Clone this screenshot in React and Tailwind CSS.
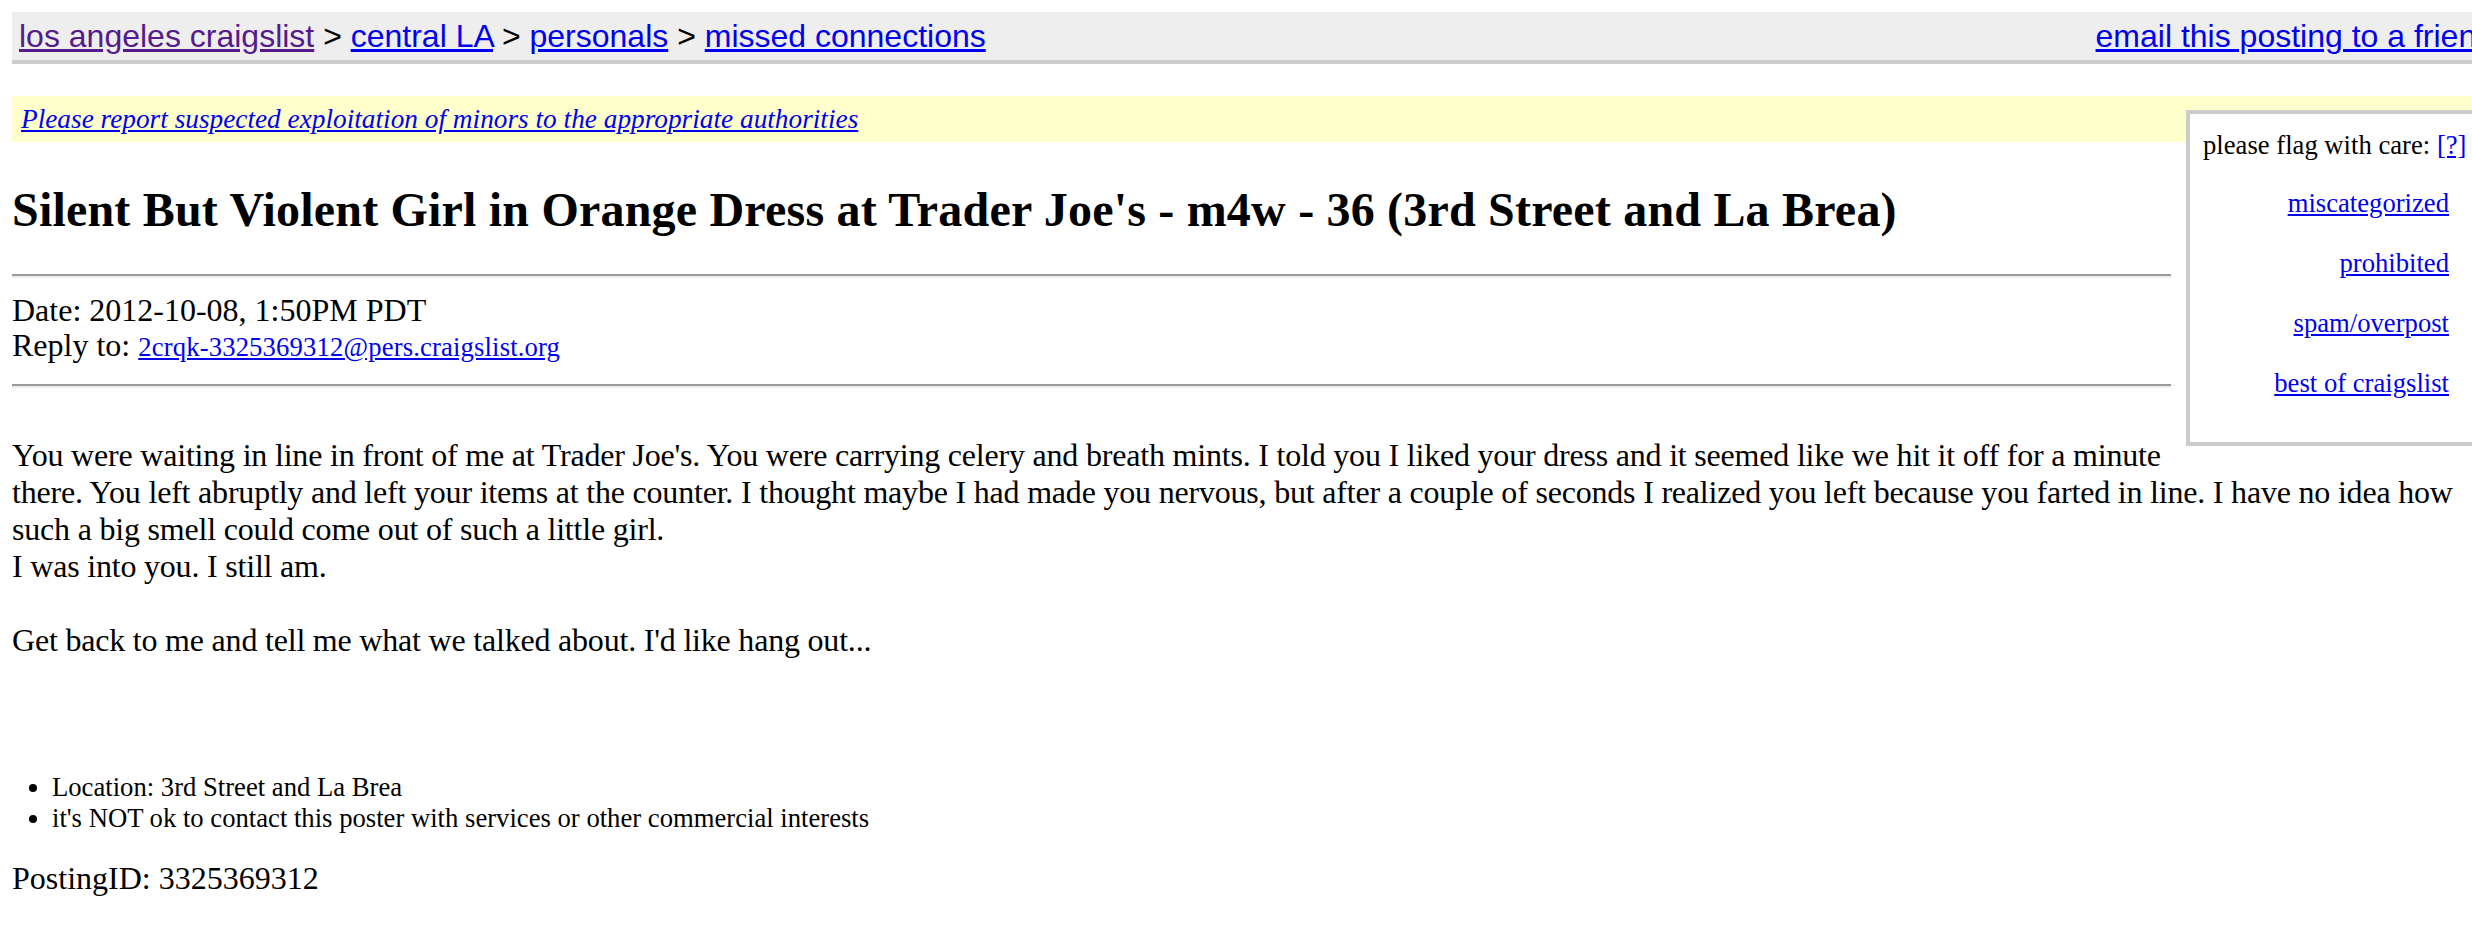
const FLAGS = ["miscategorized", "prohibited", "spam/overpost", "best of craigslist"];

const CRUMBS = [
  { label: "los angeles craigslist", visited: true },
  { label: "central LA" },
  { label: "personals" },
  { label: "missed connections" },
];

function Rule({ className = "" }) {
  return (
    <div className={`overflow-hidden ${className}`}>
      <div className="h-[2px] bg-[#9a9a9a]" />
      <div className="h-[2px] bg-[#ececec]" />
    </div>
  );
}

export default function App() {
  return (
    <div className="w-[2472px] h-[941px] overflow-hidden bg-white text-black font-['Liberation_Serif','Times_New_Roman',serif]">
      <div className="w-[2488px] ml-[12px] pt-[12px]">
        <div className="flex h-[52px] items-center justify-between border-b-4 border-[#cccccc] bg-[#eeeeee] pl-[7px] pr-[6px] font-['Liberation_Sans',Arial,sans-serif] text-[32px]">
          <div className="whitespace-nowrap">
            {CRUMBS.map((c, i) => (
              <span key={c.label}>
                {i > 0 && <span> &gt; </span>}
                <a href="#" className={`underline ${c.visited ? "text-[#551a8b]" : "text-[#0000ee]"}`}>
                  {c.label}
                </a>
              </span>
            ))}
          </div>
          <a href="#" className="whitespace-nowrap text-[#0000ee] underline">
            email this posting to a friend
          </a>
        </div>

        <div className="mt-[32px] flex h-[46px] items-center bg-[#ffffcc] pl-[9px]">
          <a href="#" className="text-[27.3px] italic text-[#0000ee] underline">
            Please report suspected exploitation of minors to the appropriate authorities
          </a>
        </div>

        <div className="float-right -mt-[32px] ml-[15px] h-[336px] w-[314px] border-4 border-[#cccccc] bg-white pl-[13px] pt-[16px] text-[26.67px] leading-[30.67px]">
          <div className="whitespace-nowrap">
            please flag with care:{" "}
            <a href="#" className="text-[#0000ee] underline">[?]</a>
          </div>
          <div className="mt-[27px] flex flex-col items-end gap-[29.5px] pr-[47px]">
            {FLAGS.map((f) => (
              <a key={f} href="#" className="text-[#0000ee] underline whitespace-nowrap">
                {f}
              </a>
            ))}
          </div>
        </div>

        <h2 className="mt-[40px] text-[48px] font-bold leading-[55px] tracking-[0.2px]">
          Silent But Violent Girl in Orange Dress at Trader Joe's - m4w - 36 (3rd Street and La Brea)
        </h2>

        <Rule className="mt-[37px]" />

        <div className="mt-[15px] text-[32px] leading-[35px]">
          <div>Date: 2012-10-08, 1:50PM PDT</div>
          <div>
            Reply to:{" "}
            <a href="#" className="text-[26.67px] tracking-[0.15px] text-[#0000ee] underline">
              2crqk-3325369312@pers.craigslist.org
            </a>
          </div>
        </div>

        <Rule className="mt-[19px]" />

        <div className="mt-[49px] text-[32px] leading-[37px] tracking-[-0.2px]">
          You were waiting in line in front of me at Trader Joe's. You were carrying celery and breath mints. I told you I liked your dress and it seemed like we hit it off for a minute there. You left abruptly and left your items at the counter. I thought maybe I had made you nervous, but after a couple of seconds I realized you left because you farted in line. I have no idea how such a big smell could come out of such a little girl.
          <br />
          I was into you. I still am.
          <br />
          <br />
          Get back to me and tell me what we talked about. I'd like hang out...
        </div>

        <ul className="mt-[113px] list-disc pl-[40px] text-[26.67px] leading-[31px]">
          <li>Location: 3rd Street and La Brea</li>
          <li>it's NOT ok to contact this poster with services or other commercial interests</li>
        </ul>

        <div className="mt-[26px] text-[32px] leading-[37px]">PostingID: 3325369312</div>
      </div>
    </div>
  );
}
